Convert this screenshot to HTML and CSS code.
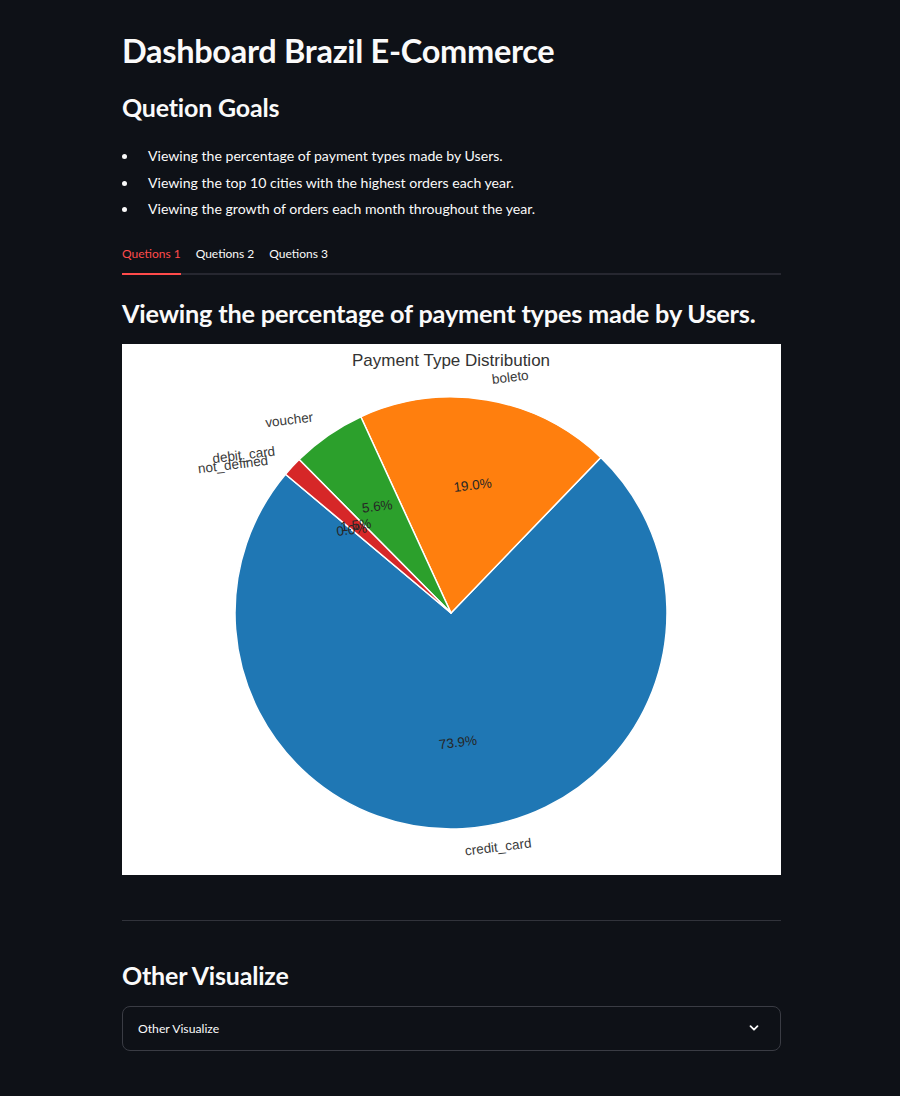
FILE: index.html
```html
<!DOCTYPE html>
<html lang="en">
<head>
<meta charset="utf-8">
<title>Dashboard Brazil E-Commerce</title>
<link rel="stylesheet" href="styles.css">
</head>
<body>
<div class="main">
  <h1 class="title">Dashboard Brazil E-Commerce</h1>
  <h2 class="heading goals">Quetion Goals</h2>
  <ul class="goal-list">
    <li>Viewing the percentage of payment types made by Users.</li>
    <li>Viewing the top 10 cities with the highest orders each year.</li>
    <li>Viewing the growth of orders each month throughout the year.</li>
  </ul>
  <div class="tabs">
    <button class="tab active">Quetions 1</button>
    <button class="tab">Quetions 2</button>
    <button class="tab">Quetions 3</button>
  </div>
  <h2 class="heading section">Viewing the percentage of payment types made by Users.</h2>
  <div class="chart">
    <svg width="659" height="531" viewBox="0 0 659 531" xmlns="http://www.w3.org/2000/svg">
      <rect x="0" y="0" width="659" height="531" fill="#ffffff"/>
      <text class="ctitle" x="329" y="22" text-anchor="middle">Payment Type Distribution</text>
      <g stroke="#ffffff" stroke-width="1.5" stroke-linejoin="round">
        <path d="M329,269 L163.5,130.2 A216,216 0 1 0 478.8,113.4 Z" fill="#1f77b4"/>
        <path d="M329,269 L478.8,113.4 A216,216 0 0 0 238.8,72.7 Z" fill="#ff7f0e"/>
        <path d="M329,269 L238.8,72.7 A216,216 0 0 0 177.1,115.5 Z" fill="#2ca02c"/>
        <path d="M329,269 L177.1,115.5 A216,216 0 0 0 163.5,130.2 Z" fill="#d62728"/>
      </g>
      <g class="lbl">
        <text x="343" y="507" text-anchor="start" transform="rotate(-7 343 507)">credit_card</text>
        <text x="370" y="35.5" text-anchor="start" transform="rotate(-7 370 35.5)">boleto</text>
        <text x="191" y="73" text-anchor="end" transform="rotate(-7 191 73)">voucher</text>
        <text x="153" y="107" text-anchor="end" transform="rotate(-7 153 107)">debit_card</text>
        <text x="146" y="116.3" text-anchor="end" transform="rotate(-7 146 116.3)">not_defined</text>
      </g>
      <g class="pct">
        <text x="335.9" y="398.4" text-anchor="middle" transform="rotate(-7 335.9 398.4)">73.9%</text>
        <text x="350.6" y="141.2" text-anchor="middle" transform="rotate(-7 350.6 141.2)">19.0%</text>
        <text x="255.2" y="162.4" text-anchor="middle" transform="rotate(-7 255.2 162.4)">5.6%</text>
        <text x="233.8" y="181.1" text-anchor="middle" transform="rotate(-7 233.8 181.1)">1.5%</text>
        <text x="229.7" y="185.7" text-anchor="middle" transform="rotate(-7 229.7 185.7)">0.0%</text>
      </g>
    </svg>
  </div>
  <hr class="divider">
  <h2 class="heading other">Other Visualize</h2>
  <div class="expander">
    <span class="exp-label">Other Visualize</span>
    <svg class="chev" width="12" height="12" viewBox="0 0 12 12" xmlns="http://www.w3.org/2000/svg">
      <path d="M2.5 4.2 L6 7.7 L9.5 4.2" fill="none" stroke="#fafafa" stroke-width="1.8" stroke-linecap="round" stroke-linejoin="round"/>
    </svg>
  </div>
</div>
</body>
</html>
```

FILE: styles.css
```css
html, body {
  margin: 0;
  padding: 0;
  background: #0e1117;
}
body {
  color: #fafafa;
  font-family: "Lato", "Noto Sans", sans-serif;
}
.main {
  width: 659px;
  margin-left: 122px;
  padding-top: 28px;
  padding-bottom: 44px;
}
.title {
  margin: 0;
  font-size: 32.5px;
  line-height: 46px;
  font-weight: 700;
  letter-spacing: -0.3px;
}
.heading {
  margin: 0;
  font-size: 25px;
  line-height: 32px;
  font-weight: 700;
  letter-spacing: -0.2px;
}
.goals {
  margin-top: 17px;
}
.goal-list {
  list-style: none;
  margin: 20px 0 0 0;
  padding: 0;
  font-size: 14.1px;
  line-height: 26.5px;
}
.goal-list li {
  position: relative;
  padding-left: 26px;
}
.goal-list li::before {
  content: "";
  position: absolute;
  left: 0;
  top: 11px;
  width: 5px;
  height: 5px;
  border-radius: 50%;
  background: #fafafa;
}
.tabs {
  display: flex;
  gap: 15px;
  margin-top: 21px;
  border-bottom: 2px solid #262730;
}
.tab {
  background: none;
  border: none;
  color: #fafafa;
  font-family: inherit;
  font-size: 12px;
  line-height: 20px;
  padding: 0 0 9px 0;
  margin: 0 0 -2px 0;
  border-bottom: 2px solid transparent;
  cursor: pointer;
}
.tab.active {
  color: #ff4b4b;
  border-bottom-color: #ff4b4b;
}
.section {
  margin-top: 22px;
  font-size: 25.3px;
}
.chart {
  margin-top: 15px;
  height: 531px;
}
.chart svg {
  display: block;
}
.ctitle {
  font-family: "Liberation Sans", Arial, sans-serif;
  font-size: 17px;
  fill: #333333;
}
.lbl text {
  font-family: "Liberation Sans", Arial, sans-serif;
  font-size: 13.5px;
  fill: #3a3a3a;
  dominant-baseline: central;
}
.pct text {
  font-family: "Liberation Sans", Arial, sans-serif;
  font-size: 13.5px;
  fill: #262626;
  dominant-baseline: central;
}
.divider {
  margin: 45px 0 0 0;
  border: none;
  border-top: 1px solid #31333b;
  height: 0;
}
.other {
  margin-top: 38px;
}
.expander {
  margin-top: 15px;
  height: 43px;
  border: 1px solid #3a3c44;
  border-radius: 8px;
  display: flex;
  align-items: center;
  justify-content: space-between;
  padding: 0 20px 0 15px;
}
.exp-label {
  font-size: 12.2px;
}
.chev {
  display: block;
}
```
